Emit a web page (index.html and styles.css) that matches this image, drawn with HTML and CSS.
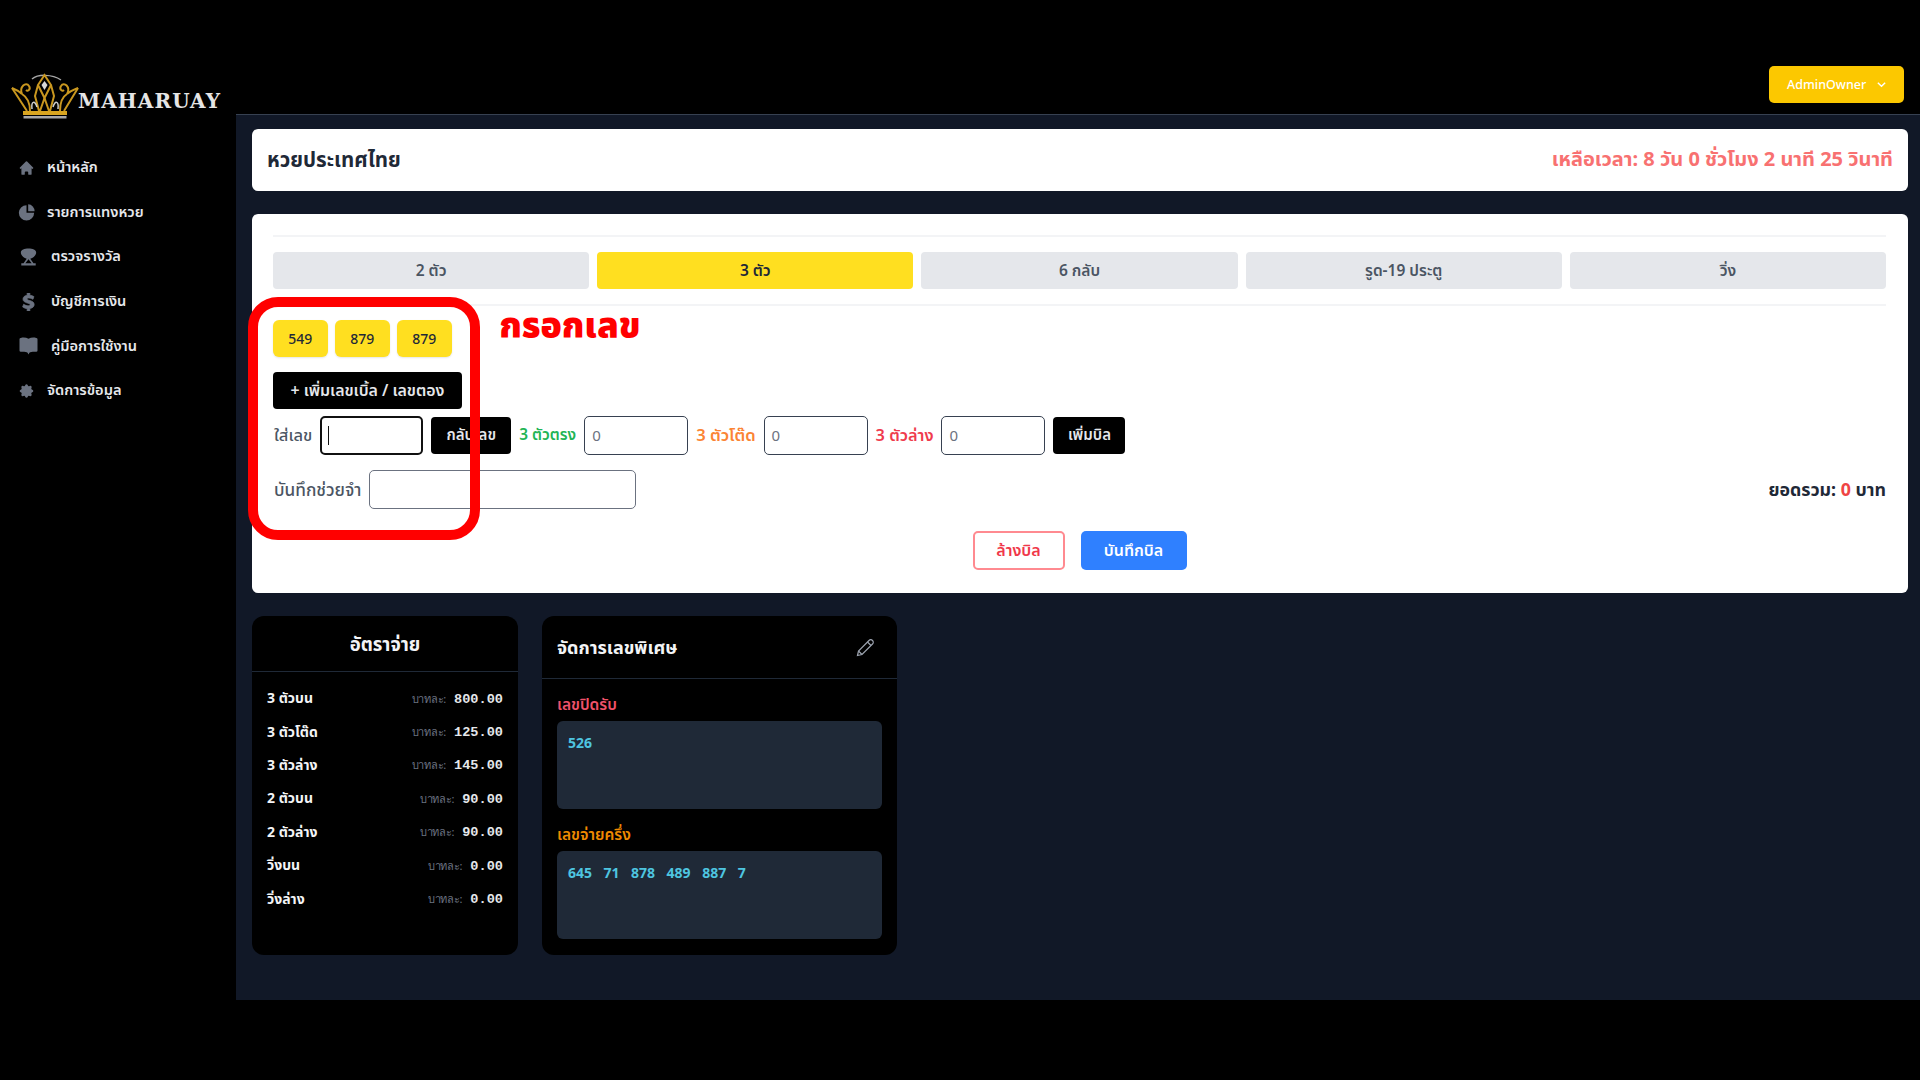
FILE: index.html
```html
<!DOCTYPE html>
<html lang="th">
<head>
    <meta charset="UTF-8">
    <title>MAHARUAY</title>
    <link rel="stylesheet" href="styles.css">
</head>
<body>
    <div class="app">
        <aside class="sidebar">
            <div class="logo">
                <svg class="crown" width="68" height="46" viewBox="0 0 68 46" fill="none">
                    <path d="M21 6 C27 1 41 1 50 7" stroke="#a8a8a8" stroke-width="1.500"/>
                    <path d="M1 15 C6 17 9 19 11 21 C8 14 15 8 18 13 C20 16 17 19 15 17 M67 15 C62 17 58 19 56 21 C60 14 53 8 50 13 C48 16 51 19 53 17" stroke="#c9971f" stroke-width="2"/>
                    <path d="M1 15 L16 38 M67 15 L53 38 M11 21 C16 24 19 30 19 38 M56 21 C51 24 49 30 49 38" stroke="#c9971f" stroke-width="2"/>
                    <path d="M33.500 2 L40 12 L33.500 25 L27 12 Z" stroke="#c9971f" stroke-width="2"/>
                    <path d="M33.500 8 L36.500 12 L33.500 17 L30.500 12 Z" fill="#d8d8d8"/>
                    <path d="M27 12 L24 23 L28 38 M40 12 L43 23 L39 38 M33.500 25 L29 38 M33.500 25 L38 38" stroke="#c9971f" stroke-width="2"/>
                    <path d="M21 36 C20 28 24 27 26 34 M47 36 C48 28 44 27 42 34" stroke="#cfcfcf" stroke-width="1.500"/>
                    <rect x="12" y="38" width="44" height="4" fill="#d9a520"/>
                    <rect x="12.500" y="43" width="43" height="2.500" fill="#a8a8a8"/>
                </svg>
                <span class="logo-text">MAHARUAY</span>
            </div>
            <nav class="nav">
                <a class="nav-item">
                    <svg class="nav-icon" viewBox="0 0 20 20"><path d="M10.707 2.293a1 1 0 00-1.414 0l-7 7a1 1 0 001.414 1.414L4 10.414V17a1 1 0 001 1h2a1 1 0 001-1v-2a1 1 0 011-1h2a1 1 0 011 1v2a1 1 0 001 1h2a1 1 0 001-1v-6.586l.293.293a1 1 0 001.414-1.414l-7-7z"/></svg>
                    หน้าหลัก
                </a>
                <a class="nav-item">
                    <svg class="nav-icon" viewBox="0 0 20 20"><path d="M1 11a9 9 0 019-9v9h9a9 9 0 11-18 0z"/><path d="M12 1a8 8 0 017.500 8H12V1z"/></svg>
                    รายการแทงหวย
                </a>
                <a class="nav-item">
                    <svg class="nav-icon wide" viewBox="0 0 21 20"><path d="M2 5C2 2 6 .5 10.500.5S19 2 19 5c0 3-3 6-6.500 7l3.500 5h2.500v2.500H2.500V17H5l3.500-5C5 11 2 8 2 5zM7 17h7l-3.500-4.500z" fill-rule="evenodd"/></svg>
                    ตรวจรางวัล
                </a>
                <a class="nav-item">
                    <svg class="nav-icon wide bold" viewBox="0 0 21 20"><path d="M9 0h3v2.500c2 .2 3.500.8 4.500 1.500l-1 3c-1.500-.9-3-1.400-4.500-1.400-1.500 0-2 .5-2 1.100 0 .8 1 1.100 3 1.700 3 .9 4.800 2 4.800 4.500 0 2.300-1.700 3.900-4.800 4.300V20H9v-2.700c-2-.2-4-.9-5-1.800l1.100-3c1.500 1 3.400 1.700 5 1.700 1.400 0 2.200-.5 2.200-1.200 0-.8-1-1.200-3-1.800C6.400 10.300 4.400 9.300 4.400 6.800c0-2.200 1.700-3.900 4.600-4.300z"/></svg>
                    บัญชีการเงิน
                </a>
                <a class="nav-item">
                    <svg class="nav-icon wide" viewBox="0 0 21 20"><path d="M2 1c3-.6 6-.4 8.500 1 2.500-1.400 5.500-1.600 8.500-1a1.500 1.500 0 011.500 1.500V15a1.500 1.500 0 01-1.500 1.500c-3-.3-6 0-7.500 1l-1 2-1-2c-1.500-1-4.500-1.300-7.500-1A1.500 1.500 0 01.500 15V2.500A1.500 1.500 0 012 1z"/></svg>
                    คู่มือการใช้งาน
                </a>
                <a class="nav-item">
                    <svg class="nav-icon" viewBox="0 0 20 20"><path d="M11.490 3.170c-.38-1.560-2.600-1.560-2.980 0a1.532 1.532 0 01-2.286.948c-1.372-.836-2.942.734-2.106 2.106.54.886.061 2.042-.947 2.287-1.561.379-1.561 2.600 0 2.978a1.532 1.532 0 01.947 2.287c-.836 1.372.734 2.942 2.106 2.106a1.532 1.532 0 012.287.947c.379 1.561 2.600 1.561 2.978 0a1.533 1.533 0 012.287-.947c1.372.836 2.942-.734 2.106-2.106a1.533 1.533 0 01.947-2.287c1.561-.379 1.561-2.600 0-2.978a1.532 1.532 0 01-.947-2.287c.836-1.372-.734-2.942-2.106-2.106a1.532 1.532 0 01-2.287-.947z"/></svg>
                    จัดการข้อมูล
                </a>
            </nav>
        </aside>

        <div class="content">
            <header class="topbar">
                <button class="user-btn">AdminOwner
                    <svg width="11" height="11" viewBox="0 0 12 12" fill="none" stroke="#fff" stroke-width="1.500"><path d="M2 4l4 4 4-4"/></svg>
                </button>
            </header>

            <main class="main">
                <section class="title-card">
                    <h1>หวยประเทศไทย</h1>
                    <span class="countdown">เหลือเวลา: 8 วัน 0 ชั่วโมง 2 นาที 25 วินาที</span>
                </section>

                <section class="bill-card">
                    <div class="tabs">
                        <button class="tab">2 ตัว</button>
                        <button class="tab active">3 ตัว</button>
                        <button class="tab">6 กลับ</button>
                        <button class="tab">รูด-19 ประตู</button>
                        <button class="tab">วิ่ง</button>
                    </div>

                    <div class="chips">
                        <span class="chip">549</span>
                        <span class="chip">879</span>
                        <span class="chip">879</span>
                    </div>

                    <button class="btn-dark add-double">+ เพิ่มเลขเบิ้ล / เลขตอง</button>

                    <div class="entry-row">
                        <label class="field-label">ใส่เลข</label>
                        <div class="input focused"><span class="caret"></span></div>
                        <button class="btn-dark flip">กลับเลข</button>
                        <label class="bet-label green">3 ตัวตรง</label>
                        <div class="input">0</div>
                        <label class="bet-label orange">3 ตัวโต๊ด</label>
                        <div class="input">0</div>
                        <label class="bet-label red">3 ตัวล่าง</label>
                        <div class="input">0</div>
                        <button class="btn-dark add-bill">เพิ่มบิล</button>
                    </div>

                    <div class="memo-row">
                        <label class="field-label memo-label">บันทึกช่วยจำ</label>
                        <div class="input memo"></div>
                        <div class="total">ยอดรวม: <span class="total-num">0</span> บาท</div>
                    </div>

                    <div class="actions">
                        <button class="btn-clear">ล้างบิล</button>
                        <button class="btn-save">บันทึกบิล</button>
                    </div>
                </section>

                <div class="lower">
                    <section class="rate-card">
                        <h2>อัตราจ่าย</h2>
                        <ul class="rate-list">
                            <li><span>3 ตัวบน</span><span class="rate"><small>บาทละ:</small> 800.00</span></li>
                            <li><span>3 ตัวโต๊ด</span><span class="rate"><small>บาทละ:</small> 125.00</span></li>
                            <li><span>3 ตัวล่าง</span><span class="rate"><small>บาทละ:</small> 145.00</span></li>
                            <li><span>2 ตัวบน</span><span class="rate"><small>บาทละ:</small> 90.00</span></li>
                            <li><span>2 ตัวล่าง</span><span class="rate"><small>บาทละ:</small> 90.00</span></li>
                            <li><span>วิ่งบน</span><span class="rate"><small>บาทละ:</small> 0.00</span></li>
                            <li><span>วิ่งล่าง</span><span class="rate"><small>บาทละ:</small> 0.00</span></li>
                        </ul>
                    </section>

                    <section class="special-card">
                        <div class="special-head">
                            <h2>จัดการเลขพิเศษ</h2>
                            <svg width="18" height="18" viewBox="0 0 18 18" fill="none" stroke="#9ca3af" stroke-width="1.200"><path d="M1.500 16.500l1-4.500L13 1.500c1-1 2.500-1 3.500 0s1 2.500 0 3.500L6 15.500z"/><path d="M2.500 12l3.500 3.500M11.500 3l3.500 3.500"/></svg>
                        </div>
                        <div class="special-body">
                            <h3 class="closed">เลขปิดรับ</h3>
                            <div class="num-box"><span>526</span></div>
                            <h3 class="half">เลขจ่ายครึ่ง</h3>
                            <div class="num-box"><span>645</span><span>71</span><span>878</span><span>489</span><span>887</span><span>7</span></div>
                        </div>
                    </section>
                </div>
            </main>
        </div>
    </div>

    <div class="mark-frame"></div>
    <div class="mark-text">กรอกเลข</div>
</body>
</html>
```

FILE: styles.css
```css
* {
    box-sizing: border-box;
    margin: 0;
    padding: 0;
    font-family: "Noto Sans", "Noto Sans Thai", "Liberation Sans", sans-serif;
}

body {
    background: #000;
    padding-top: 52px;
    height: 1080px;
    overflow: hidden;
    position: relative;
}

button {
    border: none;
    cursor: pointer;
}

.app {
    display: flex;
    height: 948px;
}

.sidebar {
    width: 236px;
    flex-shrink: 0;
    background: #000;
}

.logo {
    display: flex;
    align-items: flex-end;
    padding: 20px 0 0 11px;
    height: 67px;
}

.logo-text {
    font-family: "DejaVu Serif", serif;
    font-weight: 700;
    font-size: 20px;
    letter-spacing: 1.1px;
    color: #e5e5e5;
    margin: 0 0 6px -1px;
}

.nav {
    margin-top: 26.5px;
}

.nav-item {
    display: flex;
    align-items: center;
    gap: 12px;
    height: 44.6px;
    padding-left: 18px;
    font-size: 14.6px;
    font-weight: 600;
    color: #e5e7eb;
}

.nav-icon {
    width: 17px;
    height: 18px;
    fill: #6b7280;
    flex-shrink: 0;
}

.nav-icon.wide {
    width: 21px;
}

.nav-icon.bold {
    stroke: #6b7280;
    stroke-width: 0.8;
}

.content {
    flex: 1;
    display: flex;
    flex-direction: column;
}

.topbar {
    height: 63px;
    background: #000;
    border-bottom: 1px solid #374151;
    display: flex;
    justify-content: flex-end;
    align-items: flex-start;
    padding: 14px 16px 0 0;
}

.user-btn {
    width: 135px;
    height: 37px;
    padding-left: 18px;
    background: #fcc800;
    color: #fff;
    border-radius: 5px;
    font-size: 12.5px;
    font-weight: 500;
    display: flex;
    align-items: center;
    gap: 10px;
}

.main {
    flex: 1;
    background: #111827;
    padding: 14px 12px 0 16px;
}

.title-card {
    height: 62px;
    background: #fff;
    border-radius: 6px;
    display: flex;
    align-items: center;
    justify-content: space-between;
    padding: 0 15px;
}

.title-card h1 {
    font-size: 20.5px;
    font-weight: 700;
    color: #1f2937;
}

.countdown {
    font-size: 20px;
    font-weight: 700;
    color: #f87171;
}

.bill-card {
    margin-top: 23px;
    height: 379px;
    background: #fff;
    border-radius: 6px;
    padding: 21px 22px 0 21px;
}

.tabs {
    display: grid;
    grid-template-columns: repeat(5, 1fr);
    gap: 8px;
    padding: 15px 0;
    border-top: 2px solid #f3f4f6;
    border-bottom: 2px solid #f3f4f6;
}

.tab {
    height: 37px;
    background: #e5e7eb;
    color: #4b5563;
    border-radius: 4px;
    font-size: 15.5px;
    font-weight: 600;
}

.tab.active {
    background: #ffdf20;
    color: #1f2937;
}

.chips {
    display: flex;
    gap: 7.5px;
    margin-top: 14px;
}

.chip {
    height: 37px;
    width: 54.5px;
    justify-content: center;
    background: #ffdf20;
    color: #1f2937;
    border-radius: 6px;
    font-size: 14px;
    font-weight: 500;
    display: flex;
    align-items: center;
    box-shadow: 0 1px 2px rgba(0,0,0,0.1);
}

.btn-dark {
    height: 37px;
    background: #000;
    color: #e5e7eb;
    border-radius: 4px;
    font-size: 15px;
    font-weight: 600;
}

.add-double {
    display: block;
    width: 189px;
    margin-top: 15px;
    font-size: 15.9px;
}

.flip {
    width: 80px;
}

.add-bill {
    width: 72px;
}

.entry-row {
    display: flex;
    align-items: center;
    gap: 8px;
    margin-top: 7px;
}

.field-label {
    font-size: 16.5px;
    color: #4b5563;
    font-weight: 500;
    padding-left: 1px;
}

.memo-label {
    font-size: 17.2px;
    padding-top: 2px;
}

.bet-label {
    font-weight: 600;
}

.green { color: #22b455; font-size: 15.4px; }
.orange { color: #fb8434; font-size: 16.6px; }
.red { color: #ef3b4d; font-size: 16.3px; }

.input {
    width: 104px;
    height: 39px;
    border: 1.5px solid #374151;
    border-radius: 5px;
    background: #fff;
    color: #6b7280;
    font-size: 15px;
    padding: 0 0 1px 7px;
    display: flex;
    align-items: center;
}

.input.focused {
    width: 103px;
    border: 2px solid #111;
}

.caret {
    width: 1px;
    height: 19px;
    background: #111;
    margin-left: -1px;
}

.memo-row {
    display: flex;
    align-items: center;
    gap: 8px;
    margin-top: 15px;
}

.input.memo {
    width: 267px;
    border-color: #6b7280;
}

.total {
    margin-left: auto;
    padding-top: 2px;
    font-size: 17.8px;
    font-weight: 700;
    color: #1f2937;
}

.total-num {
    color: #ef4444;
}

.actions {
    display: flex;
    justify-content: center;
    gap: 16px;
    margin-top: 22px;
}

.btn-clear, .btn-save {
    height: 39px;
    border-radius: 5px;
    font-size: 16px;
    font-weight: 600;
}

.btn-clear {
    width: 92px;
    background: #fff;
    border: 2px solid #ff8a90;
    color: #f0384a;
}

.btn-save {
    width: 106px;
    background: #2f80ff;
    color: #fff;
}

.lower {
    display: flex;
    gap: 24px;
    margin-top: 23px;
}

.rate-card, .special-card {
    height: 339px;
    background: #000;
    border-radius: 12px;
    color: #f3f4f6;
}

.rate-card {
    width: 266px;
}

.rate-card h2 {
    height: 56px;
    line-height: 56px;
    text-align: center;
    font-size: 18.5px;
    font-weight: 700;
    border-bottom: 1px solid #1f2937;
}

.rate-list {
    list-style: none;
    padding: 10px 15px 0;
}

.rate-list li {
    display: flex;
    justify-content: space-between;
    align-items: center;
    height: 33.4px;
    font-size: 14px;
    font-weight: 700;
}

.rate {
    font-family: "Liberation Mono", monospace;
    font-size: 13.6px;
    color: #e5e7eb;
}

.rate small {
    font-family: "Noto Sans", sans-serif;
    font-size: 11px;
    font-weight: 400;
    letter-spacing: -0.3px;
    color: #6b7280;
}

.special-card {
    width: 355px;
}

.special-head {
    height: 63px;
    display: flex;
    align-items: center;
    justify-content: space-between;
    padding: 2px 23px 0 15px;
    border-bottom: 1px solid #1f2937;
}

.special-head h2 {
    font-size: 18px;
    font-weight: 700;
}

.special-body {
    padding: 14px 15px 0;
}

.special-body h3 {
    height: 28px;
    font-size: 15.5px;
    font-weight: 600;
}

.special-body h3.half {
    margin-top: 14px;
}

.closed { color: #f0526a; }
.half { color: #f08a00; }

.num-box {
    height: 88px;
    background: #1f2937;
    border-radius: 6px;
    padding: 12px 11px;
    display: flex;
    gap: 11.5px;
    align-items: flex-start;
    font-family: "Liberation Mono", monospace;
    font-size: 14px;
    font-weight: 700;
    color: #4ec5e0;
}

.mark-frame {
    position: absolute;
    left: 248px;
    top: 297px;
    width: 232px;
    height: 243px;
    border: 10px solid #f00;
    border-radius: 30px;
}

.mark-text {
    position: absolute;
    left: 499px;
    top: 299px;
    font-size: 35px;
    line-height: 50px;
    font-weight: 900;
    color: #f00;
}
```
